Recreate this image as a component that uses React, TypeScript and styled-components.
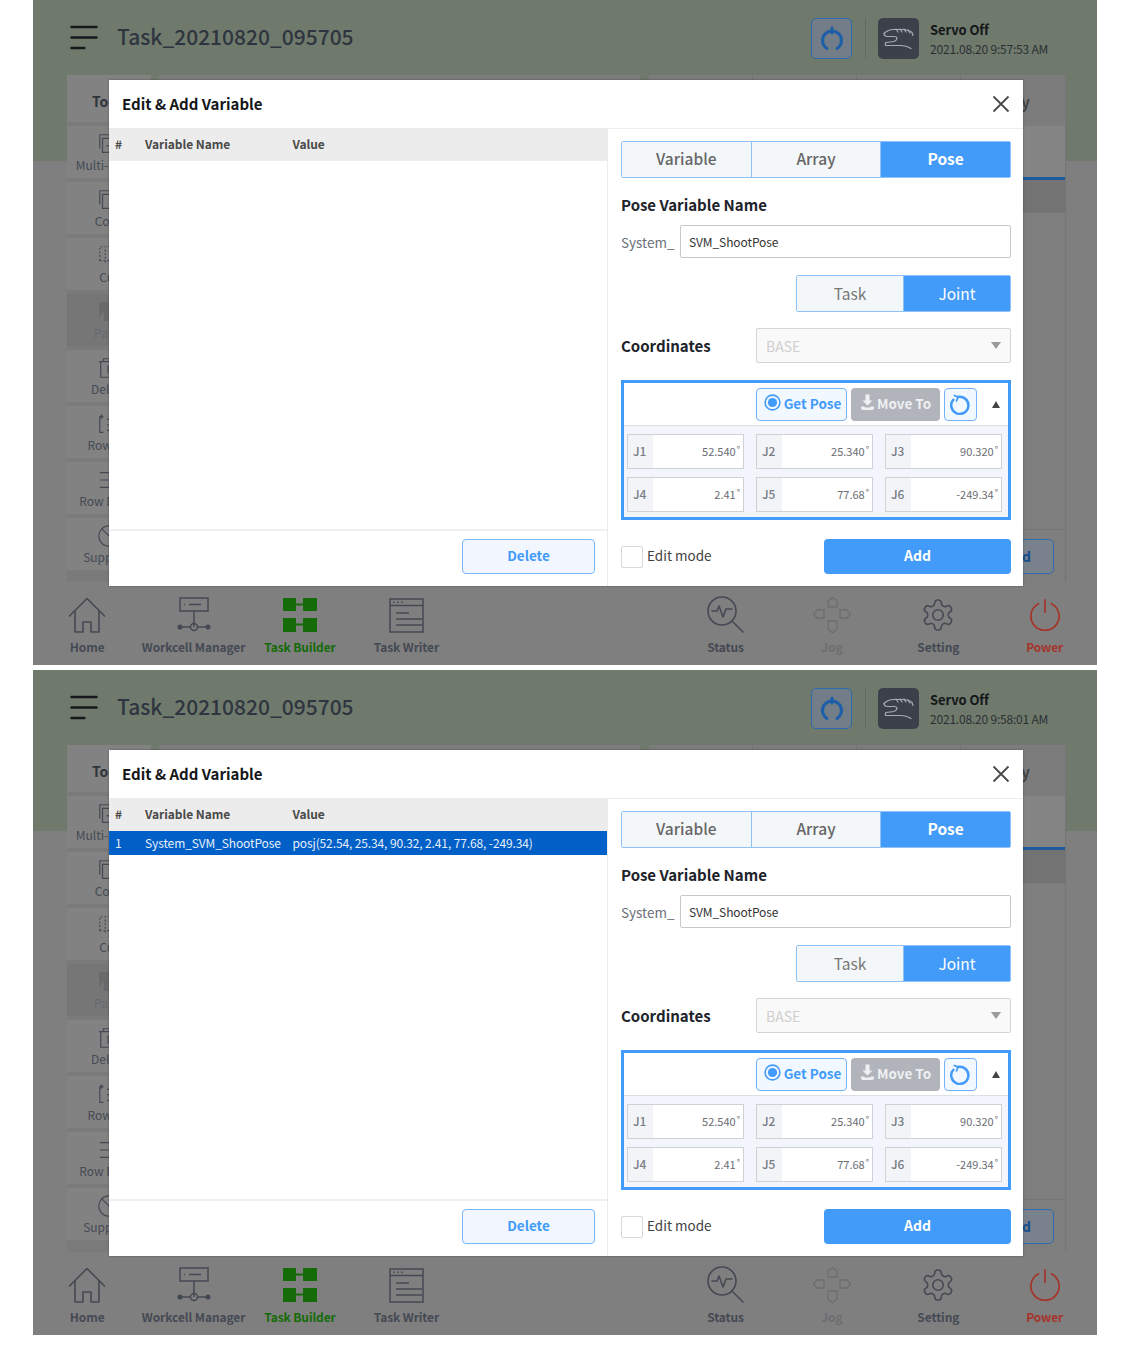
import React from "react";
import styled, { createGlobalStyle } from "styled-components";

const GlobalStyle = createGlobalStyle`
  html, body {
    margin: 0;
    padding: 0;
    background: #fff;
    font-family: "Noto Sans CJK KR", "Noto Sans", sans-serif;
  }
  * { box-sizing: border-box; }
`;

const BLUE = "#429bf9";

const Page = styled.div`
  width: 1134px;
  height: 1370px;
  padding-left: 33px;
  display: flex;
  flex-direction: column;
  gap: 5px;
`;

const Screen = styled.section`
  position: relative;
  width: 1064px;
  height: 665px;
  overflow: hidden;
  display: flex;
  flex-direction: column;
  background: linear-gradient(#6f7a6c 0, #6f7a6c 161px, #7f7f7f 161px);
`;

/* top bar */
const Header = styled.header`
  height: 75px;
  flex: none;
  display: flex;
  align-items: center;
  padding: 0 48px 0 37px;
`;
const Title = styled.h1`
  margin: 0 0 3px 19px;
  flex: 1;
  font-size: 21px;
  font-weight: 500;
  color: #2f3540;
`;
const RecoverButton = styled.div`
  width: 41px;
  height: 41px;
  margin-top: 2px;
  border: 1px solid #2c6cae;
  border-radius: 5px;
  background: #737d87;
  display: flex;
  align-items: center;
  justify-content: center;
`;
const HeadDivider = styled.div`
  width: 1px;
  height: 41px;
  margin: 2px 12px 0 13px;
  background: #626b60;
`;
const ServoIcon = styled.div`
  width: 41px;
  height: 41px;
  margin-top: 2px;
  border-radius: 5px;
  background: #3b404a;
  display: flex;
  align-items: center;
  justify-content: center;
`;
const ServoText = styled.div`
  margin: 3px 0 0 11px;
  width: 119px;
  display: flex;
  flex-direction: column;
  gap: 2px;
`;
const ServoState = styled.div`
  font-size: 13px;
  line-height: 17px;
  font-weight: 700;
  color: #14161a;
  letter-spacing: -0.1px;
`;
const ServoDate = styled.div`
  font-size: 12px;
  line-height: 17px;
  color: #2b2f35;
  letter-spacing: -0.2px;
  white-space: nowrap;
`;

/* dimmed app behind the dialog */
const Workspace = styled.div`
  flex: 1;
  min-height: 0;
  display: flex;
  gap: 8px;
  padding: 0 32px 0 34px;
`;
const Sidebar = styled.aside`
  width: 84px;
  background: #7a7a7a;
  display: flex;
  flex-direction: column;
  gap: 4px;
`;
const SideTitle = styled.div`
  height: 47px;
  background: #828282;
  padding-left: 25px;
  font-size: 14px;
  font-weight: 700;
  line-height: 52px;
  color: #30343c;
`;
const SideItem = styled.div<{ $dim?: boolean }>`
  height: 52px;
  background: ${(p) => (p.$dim ? "#767676" : "#828282")};
  color: ${(p) => (p.$dim ? "#666a70" : "#454a55")};
  display: flex;
  flex-direction: column;
  align-items: center;
  padding-top: 6px;
  font-size: 12px;
  line-height: 18px;
  white-space: nowrap;
`;
const Main = styled.main`
  flex: 1;
  display: flex;
  flex-direction: column;
  background: #7e7e7e;
  box-shadow: 1px 0 1px #757575;
`;
const MainTabs = styled.div`
  height: 102px;
  flex: none;
  display: flex;
  align-items: flex-start;
  background: #848484;
`;
const MainTab = styled.div<{ $width: number }>`
  width: ${(p) => p.$width}px;
  height: 51px;
  background: #7c7c7c;
  border-right: 1px solid #747474;
  font-size: 15px;
  line-height: 54px;
  font-weight: 700;
  color: #444;
`;
const TabGap = styled.div`
  width: 8px;
  height: 51px;
  background: #6f7a6c;
`;
const LastTab = styled(MainTab)`
  flex: 1;
  text-align: center;
  padding-right: 32px;
  border-right: 0;
`;
const ActiveLine = styled.div`
  height: 3px;
  flex: none;
  background: #1f5a9e;
`;
const DarkRow = styled.div`
  height: 33px;
  flex: none;
  background: #737373;
`;
const MainBody = styled.div`
  flex: 1;
`;
const MainFooter = styled.div`
  height: 53px;
  flex: none;
  border-top: 1px solid #747474;
  padding: 9px 11px 0 0;
  display: flex;
  justify-content: flex-end;
`;
const MainAdd = styled.div`
  width: 130px;
  height: 35px;
  border: 1px solid #2f6cab;
  border-radius: 5px;
  background: #79828c;
  color: #174f8e;
  text-align: right;
  padding-right: 22px;
  font-size: 14px;
  font-weight: 700;
  line-height: 33px;
`;

/* bottom nav */
const Nav = styled.nav`
  height: 83px;
  flex: none;
  display: grid;
  grid-template-columns: repeat(10, 106.4px);
  padding-left: 1px;
  background: #7f7f7f;
`;
const NavItem = styled.div<{ $color: string }>`
  display: flex;
  flex-direction: column;
  align-items: center;
  padding-top: 14px;
  color: ${(p) => p.$color};
`;
const NavGap = styled.div`
  grid-column: span 2;
`;
const NavIcon = styled.div`
  height: 38px;
  display: flex;
  align-items: center;
  justify-content: center;
`;
const NavLabel = styled.div`
  margin-top: 4px;
  font-size: 12px;
  line-height: 18px;
  font-weight: 700;
  letter-spacing: -0.1px;
  white-space: nowrap;
`;

/* dialog */
const Modal = styled.div`
  position: absolute;
  left: 76px;
  top: 80px;
  width: 914px;
  height: 506px;
  background: #fff;
  box-shadow: 0 0 2px rgba(0, 0, 0, 0.35);
  display: flex;
  flex-direction: column;
`;
const ModalHead = styled.div`
  height: 49px;
  flex: none;
  display: flex;
  align-items: center;
  justify-content: space-between;
  padding: 0 13px 0 13px;
  border-bottom: 1px solid #ececec;
`;
const ModalTitle = styled.div`
  font-size: 15px;
  font-weight: 700;
  color: #15171a;
  margin-bottom: 1px;
`;
const ModalBody = styled.div`
  flex: 1;
  min-height: 0;
  display: flex;
`;
const ListPane = styled.div`
  width: 499px;
  flex: none;
  display: flex;
  flex-direction: column;
  border-right: 1px solid #ececec;
`;
const ListRow = styled.div<{ $head?: boolean }>`
  display: flex;
  align-items: center;
  height: ${(p) => (p.$head ? "32px" : "24px")};
  padding: 0 0 ${(p) => (p.$head ? "3px" : "2px")} 6px;
  font-size: 12px;
  white-space: nowrap;
  letter-spacing: ${(p) => (p.$head ? "-0.05px" : "-0.12px")};
  font-weight: ${(p) => (p.$head ? 700 : 400)};
  background: ${(p) => (p.$head ? "#ececec" : "#0060c8")};
  color: ${(p) => (p.$head ? "#4a4a4a" : "#e6effa")};
`;
const ColNo = styled.div`
  width: 30px;
`;
const ColName = styled.div`
  width: 147.5px;
`;
const ListFill = styled.div`
  flex: 1;
`;
const ListFoot = styled.div`
  height: 57px;
  flex: none;
  border-top: 2px solid #f0f0f0;
  padding: 8px 12px 0 0;
  display: flex;
  justify-content: flex-end;
`;
const DeleteButton = styled.div`
  width: 133px;
  height: 35px;
  border: 1px solid #7ab8f8;
  border-radius: 4px;
  background: #f2f7ff;
  color: ${BLUE};
  text-align: center;
  font-size: 13.5px;
  font-weight: 700;
  line-height: 31px;
`;
const FormPane = styled.div`
  flex: 1;
  padding: 12px 12px 0 13px;
  display: flex;
  flex-direction: column;
`;
const Segments = styled.div<{ $width?: number }>`
  width: ${(p) => p.$width ?? 390}px;
  height: 37px;
  flex: none;
  display: flex;
  align-self: flex-end;
  border: 1px solid #8fc3f8;
  border-radius: 2px;
`;
const Segment = styled.div<{ $on?: boolean; $light?: boolean }>`
  flex: 1;
  text-align: center;
  font-size: 15.5px;
  line-height: ${(p) => (p.$light ? "35px" : "33px")};
  font-weight: ${(p) => (p.$light ? 400 : p.$on ? 700 : 500)};
  background: ${(p) => (p.$on ? BLUE : "#f4f7fa")};
  color: ${(p) => (p.$on ? "#fff" : p.$light ? "#777" : "#666")};
  & + & {
    border-left: 1px solid #8fc3f8;
  }
`;
const FieldTitle = styled.div`
  margin-top: 15px;
  font-size: 15px;
  line-height: 24px;
  font-weight: 700;
  color: #20232a;
`;
const NameRow = styled.div`
  margin-top: 8px;
  display: flex;
  align-items: center;
  justify-content: space-between;
  margin-bottom: 17px;
`;
const NamePrefix = styled.div`
  font-size: 13.5px;
  color: #6a6f7a;
`;
const NameInput = styled.div`
  width: 331px;
  height: 33px;
  border: 1px solid #c8c8c8;
  border-radius: 2px;
  padding-left: 8px;
  font-size: 12px;
  letter-spacing: -0.1px;
  line-height: 32px;
  color: #333;
`;
const CoordRow = styled.div`
  margin-top: 16px;
  display: flex;
  align-items: center;
  justify-content: space-between;
`;
const CoordLabel = styled.div`
  font-size: 15px;
  font-weight: 700;
  color: #20232a;
`;
const CoordSelect = styled.div`
  width: 255px;
  height: 35px;
  border: 1px solid #d4d4d4;
  border-radius: 2px;
  background: #f9f9f9;
  padding: 0 9px 0 9px;
  display: flex;
  align-items: center;
  justify-content: space-between;
  font-size: 14px;
  color: #cfcfcf;
`;
const CaretDown = styled.div`
  width: 0;
  height: 0;
  border-left: 5.5px solid transparent;
  border-right: 5.5px solid transparent;
  border-top: 7px solid #9a9a9a;
`;
const PoseBox = styled.div`
  margin-top: 17px;
  height: 140px;
  flex: none;
  border: 3px solid ${BLUE};
  display: flex;
  flex-direction: column;
`;
const PoseBar = styled.div`
  height: 43px;
  flex: none;
  padding-right: 8px;
  display: flex;
  align-items: center;
  justify-content: flex-end;
  gap: 4px;
  border-bottom: 1px solid #dcdfe3;
`;
const GetPose = styled.div`
  width: 91px;
  height: 33px;
  padding: 0 0 3px 2px;
  border: 1px solid #74b3f8;
  border-radius: 4px;
  background: #f2f8ff;
  color: ${BLUE};
  display: flex;
  align-items: center;
  justify-content: center;
  gap: 3px;
  font-size: 13.5px;
  font-weight: 700;
  white-space: nowrap;
`;
const MoveTo = styled.div`
  width: 89px;
  height: 33px;
  padding-bottom: 3px;
  border-radius: 4px;
  background: #b1b4ba;
  color: #eef0f2;
  display: flex;
  align-items: center;
  justify-content: center;
  gap: 2px;
  font-size: 13.5px;
  font-weight: 700;
  white-space: nowrap;
`;
const ResetButton = styled.div`
  width: 33px;
  height: 33px;
  border: 1px solid #74b3f8;
  border-radius: 4px;
  background: #f2f8ff;
  display: flex;
  align-items: center;
  justify-content: center;
`;
const CaretUp = styled.div`
  width: 0;
  height: 0;
  margin-left: 11px;
  border-left: 4.5px solid transparent;
  border-right: 4.5px solid transparent;
  border-bottom: 7px solid #444;
`;
const JointGrid = styled.div`
  flex: 1;
  background: #f2f6fc;
  padding: 8px 6px 0 3px;
  display: grid;
  grid-template-columns: repeat(3, 117px);
  grid-auto-rows: 35px;
  column-gap: 12px;
  row-gap: 8px;
`;
const JointCell = styled.div`
  display: flex;
  border: 1px solid #cfd1d4;
  background: #fff;
`;
const JointName = styled.div`
  width: 25px;
  flex: none;
  background: #f2f4f8;
  padding-left: 5px;
  font-size: 12px;
  font-weight: 500;
  line-height: 31px;
  color: #777c85;
`;
const JointValue = styled.div`
  flex: 1;
  text-align: right;
  padding-right: 3px;
  font-size: 11px;
  line-height: 32px;
  color: #6a6d73;
`;
const Deg = styled.sup`
  font-size: 9px;
  line-height: 0;
  margin-left: 1px;
  vertical-align: 3px;
`;
const FormFoot = styled.div`
  margin-top: 19px;
  display: flex;
  align-items: center;
  justify-content: space-between;
`;
const EditMode = styled.div`
  display: flex;
  align-items: center;
  gap: 4px;
`;
const EditLabel = styled.span`
  font-size: 13.5px;
  line-height: 20px;
  color: #3f3f3f;
  margin-bottom: 3px;
`;
const CheckBox = styled.div`
  width: 22px;
  height: 22px;
  border: 1px solid #d9d9d9;
  border-radius: 2px;
`;
const AddButton = styled.div`
  width: 187px;
  height: 35px;
  border-radius: 4px;
  background: ${BLUE};
  color: #fff;
  text-align: center;
  font-size: 14px;
  font-weight: 700;
  line-height: 32px;
`;

const Hamburger = () => (
  <svg width="28" height="25" viewBox="0 0 28 25" fill="none" stroke="#16181c" strokeWidth="2.4" strokeLinecap="round">
    <path d="M1.5 2h25M1.5 12.5h25M1.5 23h13" />
  </svg>
);

const RecoverIcon = () => (
  <svg width="26" height="26" viewBox="0 0 26 26" fill="none" stroke="#1d5ea8" strokeWidth="3" strokeLinecap="round">
    <path d="M8 22.500a9.500 9.500 0 1 1 10 0" />
    <path d="M13 2v5" />
  </svg>
);

const HandIcon = () => (
  <svg width="31" height="21" viewBox="0 0 31 21" fill="none" stroke="#a9adb3" strokeWidth="1.2" strokeLinecap="round" strokeLinejoin="round">
    <path d="M1 5.500c3-3 6-4 10-4l8 0c4 0 8 1 10 3l1 3" />
    <path d="M1 5.500c0 2 2 3 4 3h6c2 0 3 1 3 2s-1 2-3 3l-8 1c-1 1-1 3 0 3h15c3 0 7 1 10 3" />
    <path d="M13 1l2 3M17 1l2 3M21 1l2 3M25 2l2 3" />
  </svg>
);

const CloseIcon = () => (
  <svg width="18" height="18" viewBox="0 0 18 18" stroke="#4a4a4a" strokeWidth="1.8">
    <path d="M1.5 1.5l15 15M16.5 1.5l-15 15" />
  </svg>
);

const TargetIcon = () => (
  <svg width="17" height="17" viewBox="0 0 17 17">
    <circle cx="8.5" cy="8.5" r="7.4" fill="none" stroke={BLUE} strokeWidth="1.6" />
    <circle cx="8.5" cy="8.5" r="4.6" fill={BLUE} />
  </svg>
);

const MoveIcon = () => (
  <svg width="15" height="17" viewBox="0 0 15 17" fill="#eef0f2">
    <path d="M5.5 0.5h4v6h3l-5 5-5-5h3z" />
    <path d="M1 12.5h3l1 1h5l1-1h3v1.500a2 2 0 0 1-2 2H3a2 2 0 0 1-2-2z" />
  </svg>
);

const ResetIcon = () => (
  <svg width="21" height="21" viewBox="0 0 22 22" fill="none" stroke={BLUE} strokeWidth="2.6" strokeLinecap="round">
    <path d="M8 3.200A9 9 0 1 1 3.500 6" />
    <path d="M4.500 1.500l4 1.700-1.700 4" strokeWidth="1.800" />
  </svg>
);

const SideIcon = ({ kind }: { kind: number }) => (
  <svg width="24" height="24" viewBox="4 0 26 26" overflow="visible" fill="none" stroke="currentColor" strokeWidth="1.3">
    {kind === 0 && <path d="M7 18V3h12M10 22V7h12v15z M14 15h4" />}
    {kind === 1 && <path d="M7 18V3h12M10 22V7h12v15z" />}
    {kind === 2 && <path d="M7 18V3h12v15zM13 6v16" strokeDasharray="2 2" />}
    {kind === 3 && <path d="M7 18V3h12M12 22V9h10v13z" fill="#6a6a6a" />}
    {kind === 4 && <path d="M6 6h22M11 6V3h10v3M8 6v17h16V6M16 10v9" />}
    {kind === 5 && <path d="M11 5H7v17h4M8 3l2 2-2 2M15 8h8M15 14h8M15 20h8" />}
    {kind === 6 && <path d="M7 5h22M7 13h22M7 21h22" />}
    {kind === 7 && <path d="M17 2a11 11 0 1 0 .01 0M9 5l16 16" />}
  </svg>
);

const HomeIcon = () => (
  <svg width="38" height="37" viewBox="0 0 38 37" fill="none" stroke="currentColor" strokeWidth="1.600" strokeLinejoin="round" strokeLinecap="round">
    <path d="M1.500 19L19 1.500 36.500 19" />
    <path d="M7 14v21h8V25h8v10h8V14" />
  </svg>
);

const WorkcellIcon = () => (
  <svg width="34" height="36" viewBox="0 0 34 36" fill="none" stroke="currentColor" strokeWidth="1.500">
    <rect x="3" y="1" width="28" height="13" />
    <path d="M12 7.500h12M7 7.500h1M17 14v16M3 30h10M21 30h10" />
    <circle cx="17" cy="30" r="3.500" />
    <circle cx="3" cy="30" r="1.800" fill="currentColor" />
    <circle cx="31" cy="30" r="1.800" fill="currentColor" />
  </svg>
);

const BuilderIcon = () => (
  <svg width="34" height="35" viewBox="0 0 34 35" fill="currentColor">
    <rect x="0" y="0" width="13" height="13" />
    <rect x="20" y="0" width="14" height="13" />
    <rect x="0" y="20" width="13" height="14" />
    <rect x="20" y="20" width="14" height="14" />
    <path d="M13 5.500h7v2h-7zM13 25.500h7v2h-7z" />
  </svg>
);

const WriterIcon = () => (
  <svg width="35" height="35" viewBox="0 0 35 35" fill="none" stroke="currentColor" strokeWidth="1.500">
    <rect x="1" y="1" width="33" height="33" />
    <path d="M1 7.500h33M7 15h13M7 21h26M7 27h26" />
    <path d="M4 4.300h1.500M8 4.300h1.500M12 4.300h1.500" />
  </svg>
);

const StatusIcon = () => (
  <svg width="38" height="38" viewBox="0 0 38 38" fill="none" stroke="currentColor" strokeWidth="1.600" strokeLinecap="round" strokeLinejoin="round">
    <circle cx="15" cy="15" r="14" />
    <path d="M25 25l11 11" />
    <path d="M5 15h5l2-5 4 11 3-8h6" />
  </svg>
);

const JogIcon = () => (
  <svg width="38" height="37" viewBox="0 0 38 37" fill="none" stroke="currentColor" strokeWidth="1.300" strokeLinejoin="round">
    <path d="M15 10V4l4.500-3.500L24 4v6zM15 24h9v8l-4.500 4-4.500-4zM11 13v8H4l-3.500-4L4 13zM27 13h7l3.500 4-3.500 4h-7z" />
  </svg>
);

const GearIcon = () => (
  <svg width="36" height="36" viewBox="0 0 24 24" fill="none" stroke="currentColor" strokeWidth="1.050" strokeLinejoin="round">
    <path d="M12.220 2h-.440a2 2 0 0 0-2 2v.180a2 2 0 0 1-1 1.730l-.430.250a2 2 0 0 1-2 0l-.150-.080a2 2 0 0 0-2.730.730l-.220.380a2 2 0 0 0 .730 2.730l.150.100a2 2 0 0 1 1 1.720v.510a2 2 0 0 1-1 1.740l-.150.090a2 2 0 0 0-.730 2.730l.220.380a2 2 0 0 0 2.730.730l.150-.080a2 2 0 0 1 2 0l.430.250a2 2 0 0 1 1 1.730V20a2 2 0 0 0 2 2h.440a2 2 0 0 0 2-2v-.180a2 2 0 0 1 1-1.730l.430-.250a2 2 0 0 1 2 0l.150.080a2 2 0 0 0 2.730-.730l.220-.390a2 2 0 0 0-.730-2.730l-.150-.080a2 2 0 0 1-1-1.740v-.500a2 2 0 0 1 1-1.740l.150-.090a2 2 0 0 0 .730-2.730l-.220-.380a2 2 0 0 0-2.730-.730l-.150.080a2 2 0 0 1-2 0l-.430-.250a2 2 0 0 1-1-1.730V4a2 2 0 0 0-2-2z" />
    <circle cx="12" cy="12" r="3.500" />
  </svg>
);

const PowerIcon = () => (
  <svg width="32" height="32" viewBox="0 0 34 34" fill="none" stroke="currentColor" strokeWidth="1.800" strokeLinecap="round">
    <path d="M10 5a15 15 0 1 0 14 0" />
    <path d="M17 1v13" />
  </svg>
);

const sideItems = [
  { label: "Multi-Select" },
  { label: "Copy" },
  { label: "Cut" },
  { label: "Paste", dim: true },
  { label: "Delete" },
  { label: "Row Up" },
  { label: "Row Down" },
  { label: "Suppress" },
];

const joints = [
  ["J1", "52.540"],
  ["J2", "25.340"],
  ["J3", "90.320"],
  ["J4", "2.41"],
  ["J5", "77.68"],
  ["J6", "-249.34"],
];

const navDark = "#454953";

const AppScreen = ({ date, hasRow }: { date: string; hasRow: boolean }) => (
  <Screen>
    <Header>
      <Hamburger />
      <Title>Task_20210820_095705</Title>
      <RecoverButton>
        <RecoverIcon />
      </RecoverButton>
      <HeadDivider />
      <ServoIcon>
        <HandIcon />
      </ServoIcon>
      <ServoText>
        <ServoState>Servo Off</ServoState>
        <ServoDate>{date}</ServoDate>
      </ServoText>
    </Header>

    <Workspace>
      <Sidebar>
        <SideTitle>Tools</SideTitle>
        {sideItems.map((item, i) => (
          <SideItem key={item.label} $dim={item.dim}>
            <SideIcon kind={i} />
            {item.label}
          </SideItem>
        ))}
      </Sidebar>
      <Main>
        <MainTabs>
          <MainTab $width={482} />
          <TabGap />
          <MainTab $width={104} />
          <MainTab $width={104} />
          <MainTab $width={104} />
          <LastTab $width={104}>Property</LastTab>
        </MainTabs>
        <ActiveLine />
        <DarkRow />
        <MainBody />
        <MainFooter>
          <MainAdd>Add</MainAdd>
        </MainFooter>
      </Main>
    </Workspace>

    <Nav>
      <NavItem $color={navDark}>
        <NavIcon><HomeIcon /></NavIcon>
        <NavLabel>Home</NavLabel>
      </NavItem>
      <NavItem $color={navDark}>
        <NavIcon><WorkcellIcon /></NavIcon>
        <NavLabel>Workcell Manager</NavLabel>
      </NavItem>
      <NavItem $color="#146b08">
        <NavIcon><BuilderIcon /></NavIcon>
        <NavLabel>Task Builder</NavLabel>
      </NavItem>
      <NavItem $color={navDark}>
        <NavIcon><WriterIcon /></NavIcon>
        <NavLabel>Task Writer</NavLabel>
      </NavItem>
      <NavGap />
      <NavItem $color={navDark}>
        <NavIcon><StatusIcon /></NavIcon>
        <NavLabel>Status</NavLabel>
      </NavItem>
      <NavItem $color="#6c6e72">
        <NavIcon><JogIcon /></NavIcon>
        <NavLabel>Jog</NavLabel>
      </NavItem>
      <NavItem $color={navDark}>
        <NavIcon><GearIcon /></NavIcon>
        <NavLabel>Setting</NavLabel>
      </NavItem>
      <NavItem $color="#a5352b">
        <NavIcon><PowerIcon /></NavIcon>
        <NavLabel>Power</NavLabel>
      </NavItem>
    </Nav>

    <Modal>
      <ModalHead>
        <ModalTitle>Edit &amp; Add Variable</ModalTitle>
        <CloseIcon />
      </ModalHead>
      <ModalBody>
        <ListPane>
          <ListRow $head>
            <ColNo>#</ColNo>
            <ColName>Variable Name</ColName>
            <div>Value</div>
          </ListRow>
          {hasRow && (
            <ListRow>
              <ColNo>1</ColNo>
              <ColName>System_SVM_ShootPose</ColName>
              <div>posj(52.54, 25.34, 90.32, 2.41, 77.68, -249.34)</div>
            </ListRow>
          )}
          <ListFill />
          <ListFoot>
            <DeleteButton>Delete</DeleteButton>
          </ListFoot>
        </ListPane>
        <FormPane>
          <Segments>
            <Segment>Variable</Segment>
            <Segment>Array</Segment>
            <Segment $on>Pose</Segment>
          </Segments>
          <FieldTitle>Pose Variable Name</FieldTitle>
          <NameRow>
            <NamePrefix>System_</NamePrefix>
            <NameInput>SVM_ShootPose</NameInput>
          </NameRow>
          <Segments $width={215}>
            <Segment $light>Task</Segment>
            <Segment $on $light>Joint</Segment>
          </Segments>
          <CoordRow>
            <CoordLabel>Coordinates</CoordLabel>
            <CoordSelect>
              BASE
              <CaretDown />
            </CoordSelect>
          </CoordRow>
          <PoseBox>
            <PoseBar>
              <GetPose>
                <TargetIcon />
                Get Pose
              </GetPose>
              <MoveTo>
                <MoveIcon />
                Move To
              </MoveTo>
              <ResetButton>
                <ResetIcon />
              </ResetButton>
              <CaretUp />
            </PoseBar>
            <JointGrid>
              {joints.map(([name, value]) => (
                <JointCell key={name}>
                  <JointName>{name}</JointName>
                  <JointValue>
                    {value}
                    <Deg>°</Deg>
                  </JointValue>
                </JointCell>
              ))}
            </JointGrid>
          </PoseBox>
          <FormFoot>
            <EditMode>
              <CheckBox />
              <EditLabel>Edit mode</EditLabel>
            </EditMode>
            <AddButton>Add</AddButton>
          </FormFoot>
        </FormPane>
      </ModalBody>
    </Modal>
  </Screen>
);

export default function App() {
  return (
    <Page>
      <GlobalStyle />
      <AppScreen date="2021.08.20 9:57:53 AM" hasRow={false} />
      <AppScreen date="2021.08.20 9:58:01 AM" hasRow />
    </Page>
  );
}
